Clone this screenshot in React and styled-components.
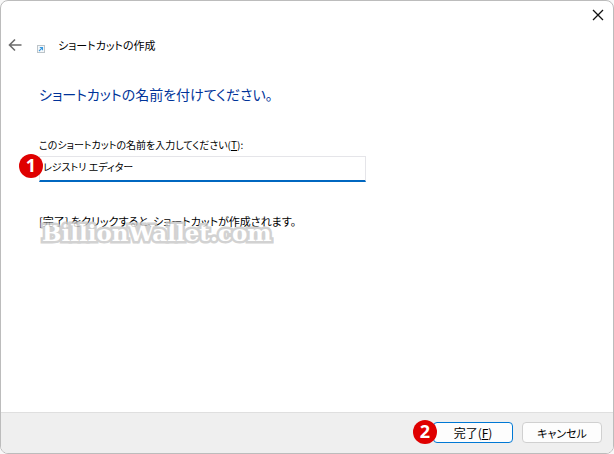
import React, { useState } from 'react';
import styled, { createGlobalStyle } from 'styled-components';

const GlobalStyle = createGlobalStyle`
  * { box-sizing: border-box; }
  body {
    margin: 0;
    background: #f8f8f8;
    color: #000;
    font: 11px/20px "Noto Sans CJK JP", "Noto Sans", sans-serif;
    font-feature-settings: "palt";
  }
  button, input { font: inherit; font-feature-settings: inherit; color: inherit; }
`;

const Dialog = styled.main`
  display: flex;
  flex-direction: column;
  min-height: 100vh;
  overflow: hidden;
  background: #fff;
  border: 1px solid #bcbcbc;
  border-radius: 8px;
`;

const TitleBar = styled.div`
  display: flex;
  justify-content: flex-end;
  height: 30px;
`;

const IconButton = styled.button`
  display: grid;
  place-items: center;
  width: ${({ $wide }) => ($wide ? 30 : 28)}px;
  height: 28px;
  padding: 0;
  border: 0;
  background: transparent;
`;

const Header = styled.header`
  display: flex;
  align-items: center;
  height: 28px;
`;

const ShortcutIcon = styled.svg`
  margin: 8px 13px 0 8px;
`;

const Title = styled.h1`
  margin: 0;
  font-size: 11px;
  font-weight: 400;
`;

const Content = styled.section`
  flex: 1;
  padding: 23px 38px;
`;

const Heading = styled.h2`
  margin: 0 0 29px;
  color: #003399;
  font-size: 14px;
  line-height: 24px;
  font-weight: 400;
`;

const Label = styled.label`
  display: block;
  margin-bottom: 1px;
  font-size: 10px;
`;

const Field = styled.div`
  position: relative;
  max-width: 327px;
  margin-bottom: 29px;
`;

const NameInput = styled.input`
  display: block;
  width: 100%;
  height: 26px;
  padding: 0 3px 4px;
  font-size: 10px;
  border: 1px solid #e5e5e9;
  border-bottom: 2px solid #0067c0;
  border-radius: 0;
  background: #fff;
  outline: none;
`;

const Note = styled.p`
  position: relative;
  margin: 0;
`;

const Watermark = styled.span`
  position: absolute;
  top: 10px;
  left: 3px;
  color: #fff;
  font: bold 23px/24px "DejaVu Serif", serif;
  -webkit-text-stroke: 5px #c8c8c8;
  paint-order: stroke fill;
  stroke-linejoin: round;
  opacity: 0.8;
  pointer-events: none;
`;

const Footer = styled.footer`
  display: flex;
  justify-content: flex-end;
  gap: 9px;
  padding: 9px 11px 10px;
  background: #efefef;
  border-top: 1px solid #dfdfdf;
`;

const Action = styled.div`
  position: relative;
`;

const Button = styled.button`
  display: block;
  width: 80px;
  height: 21px;
  padding: 0;
  font-size: ${({ $primary }) => ($primary ? 12 : 11)}px;
  line-height: 18px;
  background: #fdfdfd;
  border: 1px solid ${({ $primary }) => ($primary ? '#0078d4' : '#d0d0d0')};
  border-radius: 4px;
`;

const Step = styled.span`
  position: absolute;
  top: -2px;
  left: -20px;
  width: 24px;
  height: 24px;
  border-radius: 50%;
  background: #df0000;
  color: #fff;
  font: bold 18px/22px "Noto Sans", sans-serif;
  text-align: center;
`;

export default function App() {
  const [name, setName] = useState('レジストリ エディター');
  return (
    <>
      <GlobalStyle />
      <Dialog>
        <TitleBar>
          <IconButton $wide aria-label="閉じる">
            <svg width="12" height="12" viewBox="0 0 12 12" fill="none" stroke="#111" strokeWidth="1.3">
              <path d="M1 1l10 10M11 1L1 11" />
            </svg>
          </IconButton>
        </TitleBar>
        <Header>
          <IconButton aria-label="戻る">
            <svg width="14" height="14" viewBox="0 0 14 14" fill="none" stroke="#6b6b6b" strokeWidth="1.6">
              <path d="M13.5 7H2M7 1.5L1.5 7L7 12.5" />
            </svg>
          </IconButton>
          <ShortcutIcon width="8" height="8" viewBox="0 0 8 8" aria-hidden="true">
            <rect x="0.5" y="0.5" width="7" height="7" fill="#f5f8fa" stroke="#bcc4c9" />
            <path d="M2 6L5.2 2.8M2.8 2.5H5.5V5.2" fill="none" stroke="#3a9ae0" strokeWidth="1.1" />
          </ShortcutIcon>
          <Title>ショートカットの作成</Title>
        </Header>
        <Content>
          <Heading>ショートカットの名前を付けてください。</Heading>
          <Label htmlFor="shortcut-name">このショートカットの名前を入力してください(<u>T</u>):</Label>
          <Field>
            <NameInput id="shortcut-name" value={name} onChange={(e) => setName(e.target.value)} />
            <Step>1</Step>
          </Field>
          <Note>
            [完了] をクリックすると、ショートカットが作成されます。
            <Watermark>BillionWallet.com</Watermark>
          </Note>
        </Content>
        <Footer>
          <Action>
            <Button $primary>完了(<u>F</u>)</Button>
            <Step>2</Step>
          </Action>
          <Button>キャンセル</Button>
        </Footer>
      </Dialog>
    </>
  );
}
